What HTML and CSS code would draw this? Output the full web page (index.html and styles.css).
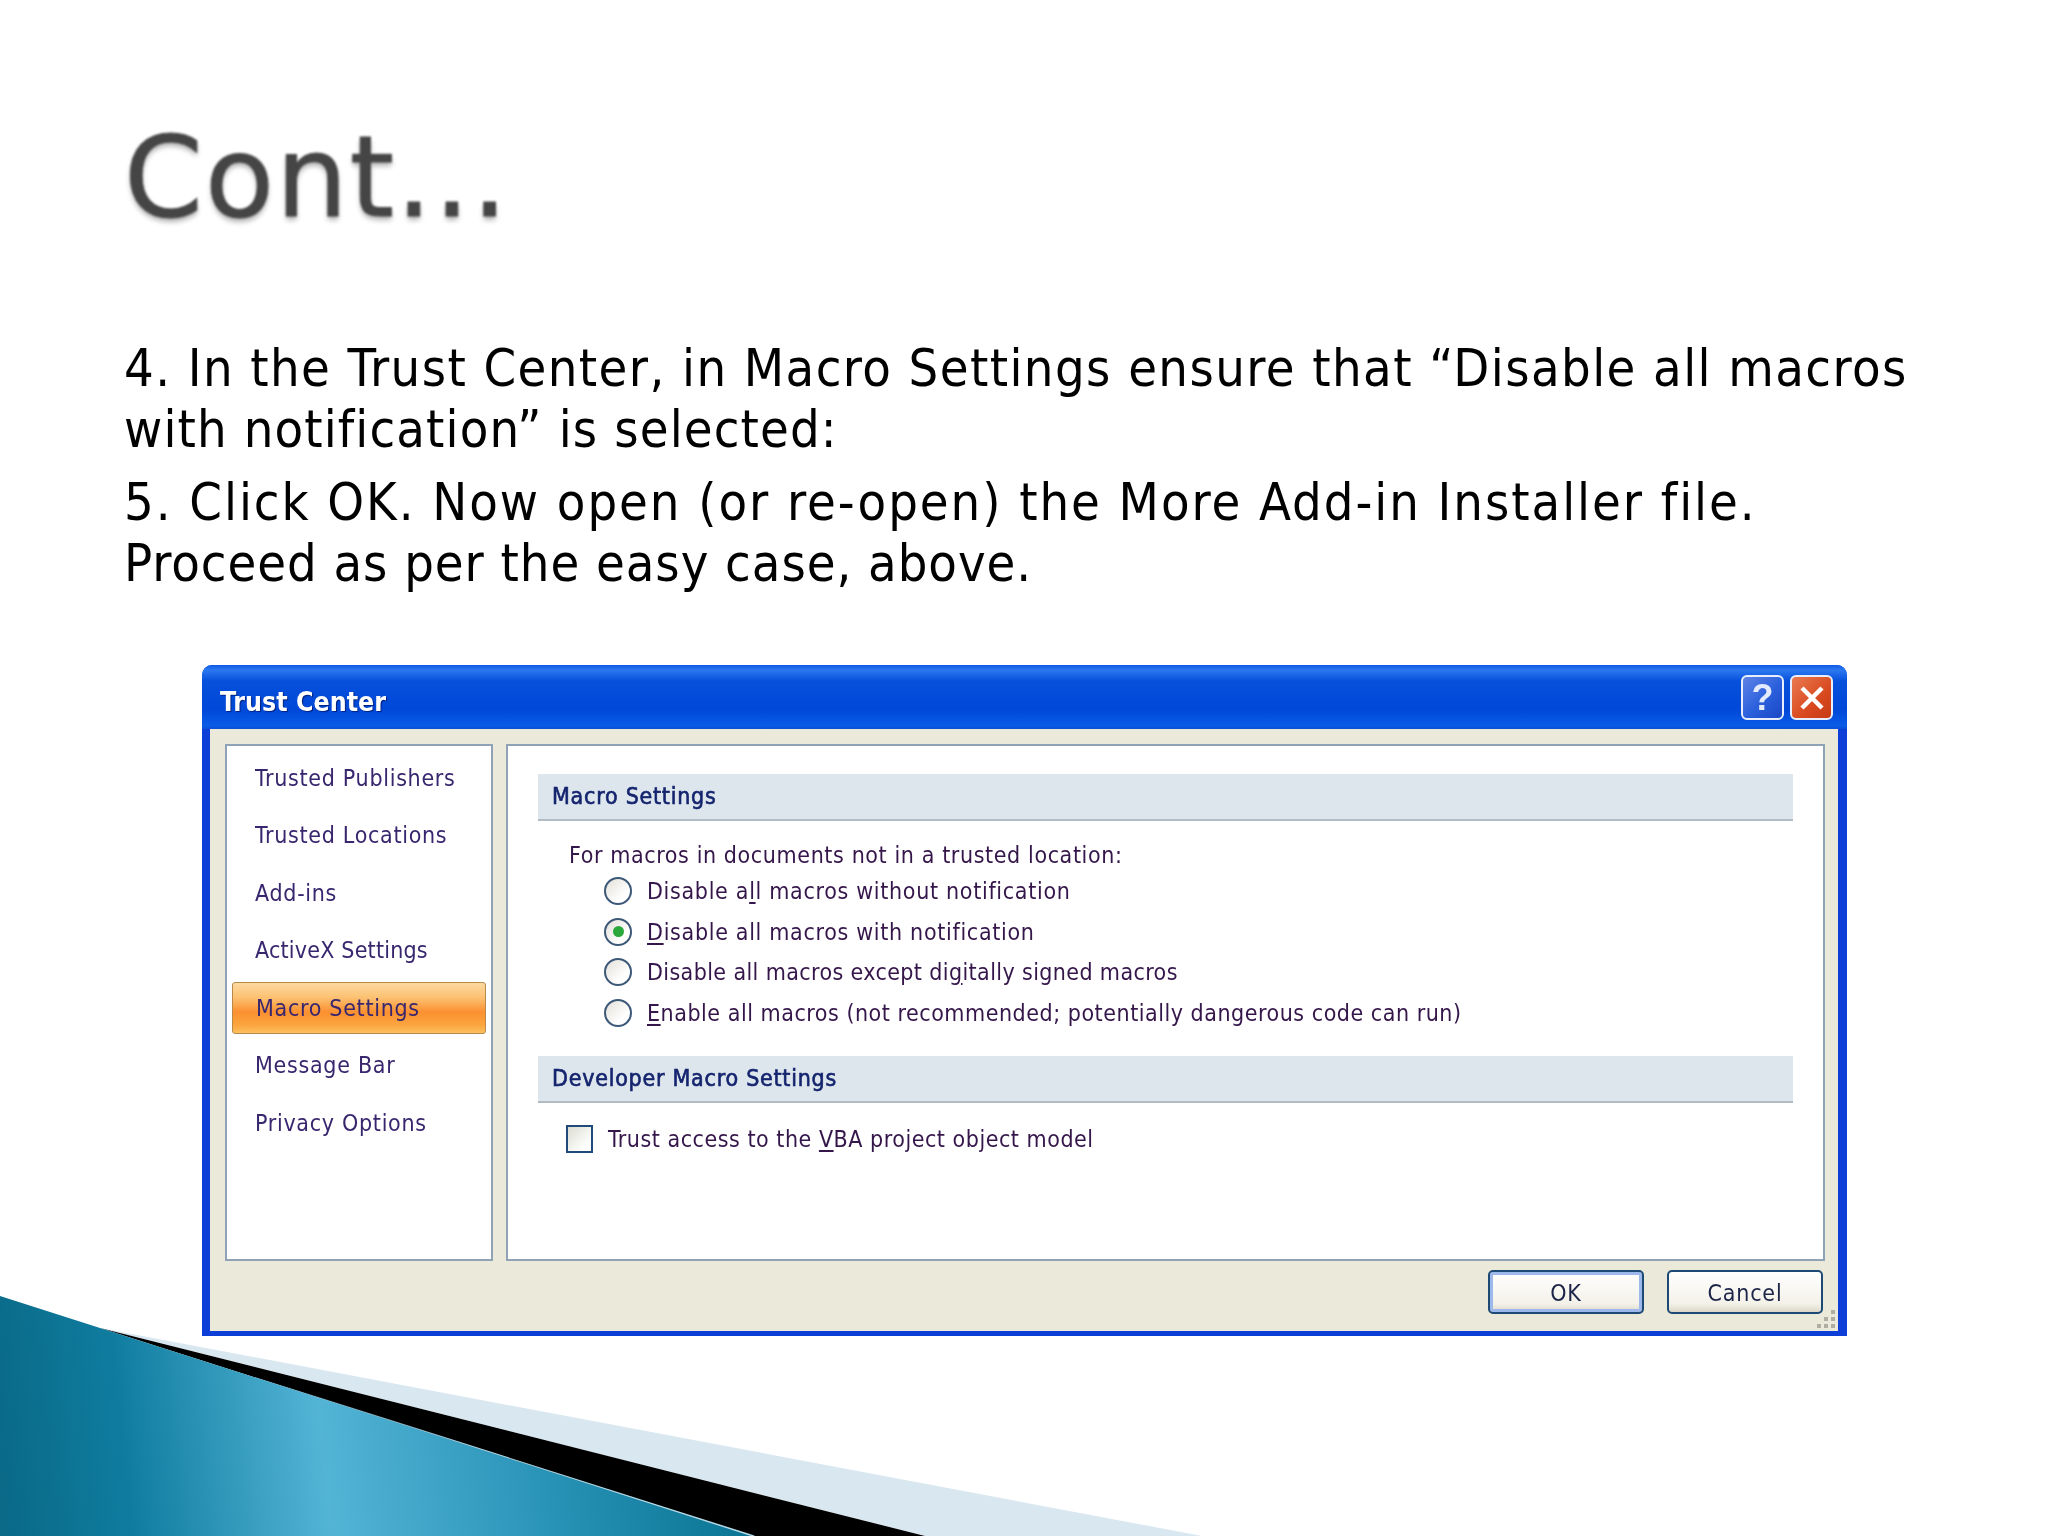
FILE: index.html
```html
<!DOCTYPE html>
<html lang="en">
<head>
<meta charset="utf-8">
<title>Cont...</title>
<link rel="stylesheet" href="styles.css">
</head>
<body>
<main class="slide">
  <svg class="decor" width="1300" height="240" viewBox="0 1296 1300 240" aria-hidden="true">
    <defs>
      <linearGradient id="wave" gradientUnits="userSpaceOnUse" x1="0" y1="1450" x2="760" y2="1370">
        <stop offset="0" stop-color="#0a6a88"/>
        <stop offset="0.16" stop-color="#0f7c9f"/>
        <stop offset="0.42" stop-color="#53b4d6"/>
        <stop offset="0.7" stop-color="#2a94b8"/>
        <stop offset="1" stop-color="#06708f"/>
      </linearGradient>
      <linearGradient id="edge" gradientUnits="userSpaceOnUse" x1="180" y1="1353" x2="753" y2="1536">
        <stop offset="0" stop-color="#b5dbe8" stop-opacity="0"/>
        <stop offset="0.5" stop-color="#b5dbe8"/>
        <stop offset="1" stop-color="#b5dbe8"/>
      </linearGradient>
    </defs>
    <polygon points="100,1328 1202,1536 925,1536" fill="#d8e7f0"/>
    <polygon points="100,1328 925,1536 753,1536" fill="#000"/>
    <polygon points="0,1296 100,1328 753,1536 0,1536" fill="url(#wave)"/>
    <polygon points="180,1353 753,1535 755,1536 751,1536" fill="url(#edge)"/>
  </svg>

  <h1 class="title">Cont...</h1>

  <div class="body-text">
    <p class="step-four">4. In the Trust Center, in Macro Settings ensure that “Disable all macros <span class="tail-four">with notification” is selected:</span></p>
    <p class="step-five">5. Click OK. Now open (or re-open) the More Add-in Installer file. <span class="tail-five">Proceed as per the easy case, above.</span></p>
  </div>

  <section class="dialog">
    <header class="titlebar">
      <span class="titlebar-text">Trust Center</span>
      <div class="caption-btns">
        <span class="caption-btn help">?</span>
        <span class="caption-btn close">
          <svg width="28" height="28" viewBox="0 0 28 28"><path d="M4 4 L24 24 M24 4 L4 24" stroke="#fff" stroke-width="4.5"/></svg>
        </span>
      </div>
    </header>

    <div class="client">
      <div class="panes">
        <nav class="sidebar">
          <a class="nav-item">Trusted Publishers</a>
          <a class="nav-item">Trusted Locations</a>
          <a class="nav-item">Add-ins</a>
          <a class="nav-item activex">ActiveX Settings</a>
          <a class="nav-item selected">Macro Settings</a>
          <a class="nav-item">Message Bar</a>
          <a class="nav-item">Privacy Options</a>
        </nav>
        <div class="content">
          <h2 class="section-head">Macro Settings</h2>
          <p class="lead">For macros in documents not in a trusted location:</p>
          <ul class="radios">
            <li class="opt wide"><span class="radio"></span>Disable a<u>l</u>l macros without notification</li>
            <li class="opt wide"><span class="radio on"></span><u>D</u>isable all macros with notification</li>
            <li class="opt tight"><span class="radio"></span>Disable all macros except di<u>g</u>itally signed macros</li>
            <li class="opt"><span class="radio"></span><u>E</u>nable all macros (not recommended; potentially dangerous code can run)</li>
          </ul>
          <h2 class="section-head second">Developer Macro Settings</h2>
          <div class="check-row"><span class="check"></span>Trust access to the <u>V</u>BA project object model</div>
        </div>
      </div>
      <footer class="actions">
        <button class="btn default">OK</button>
        <button class="btn">Cancel</button>
        <svg class="grip" width="22" height="22" viewBox="0 0 22 22"><path fill="#b0aea2" d="M16 1h4v4h-4zM9 8h4v4H9zM16 8h4v4h-4zM2 15h4v4H2zM9 15h4v4H9zM16 15h4v4h-4z"/></svg>
      </footer>
    </div>
  </section>
</main>
</body>
</html>
```
FILE: styles.css
```css
* { box-sizing: border-box; }
html, body { margin: 0; padding: 0; background: #fff; }
.slide {
  position: relative;
  width: 2048px;
  height: 1536px;
  overflow: hidden;
  padding: 111px 90px 0 124px;
  font-family: "DejaVu Sans", sans-serif;
}
.decor { position: absolute; left: 0; bottom: 0; }
.title {
  margin: 0;
  height: 132px;
  font-size: 113px;
  line-height: 132px;
  letter-spacing: 2px;
  font-weight: 400;
  color: #454545;
  -webkit-text-stroke: 1px #454545;
  text-shadow: 0 4px 5px rgba(0,0,0,.3);
  filter: blur(1px);
}
.body-text {
  margin-top: 95px;
  padding-right: 43px;
  font-family: "DejaVu Sans Condensed", "DejaVu Sans", sans-serif;
  font-size: 52px;
  line-height: 61px;
  color: #000;
}
.body-text p { margin: 0 0 12px; }
.step-four { letter-spacing: 1.42px; }
.tail-four { letter-spacing: 1.12px; }
.step-five { letter-spacing: 1.95px; }
.tail-five { letter-spacing: .95px; }
.dialog {
  position: relative;
  margin: 71px 0 0 78px;
  width: 1645px;
  height: 671px;
  display: flex;
  flex-direction: column;
  background: #0d3fd8;
  border-radius: 10px 10px 0 0;
  padding: 0 9px 5px 8px;
  font-family: "DejaVu Sans Condensed", "DejaVu Sans", sans-serif;
  font-size: 23px;
  filter: blur(.5px);
}
.titlebar {
  height: 64px;
  margin: 0 -9px 0 -8px;
  padding: 13px 14px 6px 18px;
  display: flex;
  justify-content: space-between;
  align-items: center;
  border-radius: 10px 10px 0 0;
  background: linear-gradient(180deg, #0f5ae6 0%, #2b78f0 8%, #0650dc 25%, #0048d8 70%, #0a5ce8 95%, #0a4fd4 100%);
}
.titlebar-text {
  color: #fff;
  font-weight: 700;
  font-size: 26.5px;
  text-shadow: 1px 1px 1px #02207a;
  margin-top: 2px;
}
.caption-btns { display: flex; gap: 6px; margin-top: -6px; }
.caption-btn {
  width: 43px;
  height: 45px;
  display: flex;
  align-items: center;
  justify-content: center;
  border: 2px solid #e8eefc;
  border-radius: 6px;
}
.help {
  background: linear-gradient(135deg, #5f84e6, #2a5fdc 55%, #1a48c4);
  color: #e4ebff;
  font-family: "Liberation Sans", sans-serif;
  font-weight: 700;
  font-size: 36px;
}
.close { background: linear-gradient(135deg, #ea7a50, #d94a20 60%, #c63a14); }
.client { flex: 1; display: flex; flex-direction: column; background: #ebe9d9; padding: 15px 13px 0 15px; min-height: 0; }
.panes { display: flex; gap: 13px; height: 517px; }
.sidebar {
  width: 268px;
  background: #fff;
  border: 2px solid #8fa2b6;
  padding: 3px 5px 5px;
  display: flex;
  flex-direction: column;
}
.nav-item {
  height: 57.5px;
  flex: none;
  display: flex;
  align-items: center;
  padding-left: 23px;
  color: #38266e;
  letter-spacing: .7px;
}
.nav-item.activex { letter-spacing: .2px; }
.nav-item.selected {
  height: 52px;
  margin: 3px 0 2.5px;
  border: 1px solid #b88a4a;
  border-radius: 3px;
  background: linear-gradient(180deg, #fdd9a0 0%, #fcc070 30%, #fb9030 58%, #fca640 85%, #fdc060 100%);
}
.content {
  flex: 1;
  background: #fff;
  border: 2px solid #8fa2b6;
  padding: 28px 30px 0 30px;
  color: #35164a;
  letter-spacing: .52px;
}
.section-head {
  margin: 0;
  height: 47px;
  padding: 0 0 2px 14px;
  display: flex;
  align-items: center;
  background: #dde6ec;
  border-bottom: 2px solid #b4bcc3;
  font-size: 23px;
  font-weight: 400;
  letter-spacing: .75px;
  color: #14246e;
  -webkit-text-stroke: .6px #14246e;
}
.section-head.second { margin-top: 23px; height: 47px; }
.lead { margin: 20px 0 0 31px; height: 28px; line-height: 28px; letter-spacing: .6px; }
.radios { list-style: none; margin: 2px 0 0 66px; padding: 0; }
.opt { height: 40.5px; display: flex; align-items: center; white-space: pre; }
.opt.wide { letter-spacing: .68px; }
.opt.tight { letter-spacing: .38px; }
.opt u, .check-row u { text-underline-offset: 3px; }
.radio {
  flex: none;
  width: 28px;
  height: 28px;
  margin-right: 15px;
  border: 2px solid #3d5878;
  border-radius: 50%;
  background: linear-gradient(135deg, #e2e0d8, #fff 70%);
  display: flex;
  align-items: center;
  justify-content: center;
}
.radio.on::after { content: ""; width: 11px; height: 11px; border-radius: 50%; background: #2aa83c; }
.check-row { margin: 22px 0 0 28px; display: flex; align-items: center; white-space: pre; }
.check {
  flex: none;
  width: 27px;
  height: 28px;
  margin-right: 15px;
  border: 2px solid #1f4a7a;
  background: linear-gradient(135deg, #dcdcd2, #fff 80%);
}
.actions {
  position: relative;
  flex: 1;
  display: flex;
  justify-content: flex-end;
  align-items: flex-start;
  gap: 23px;
  padding: 9px 2px 0 0;
}
.btn {
  width: 156px;
  height: 44px;
  padding: 2px 0 0;
  border: 2px solid #1c4a74;
  border-radius: 5px;
  background: linear-gradient(180deg, #fff, #f3f1e8 80%, #dcd8c8);
  color: #1c2448;
  font: inherit;
  letter-spacing: .8px;
}
.btn.default { box-shadow: inset 0 0 0 3px #9db8ea; }
.grip { position: absolute; right: -12px; bottom: 0; }
```
